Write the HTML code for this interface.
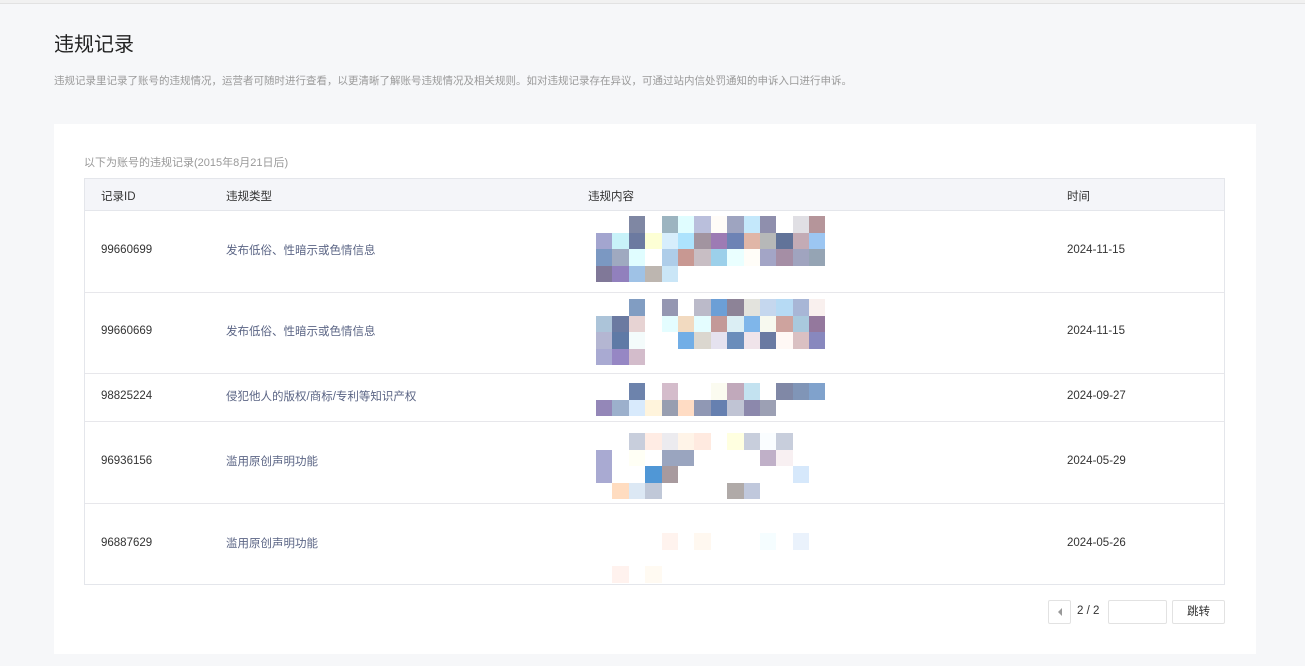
<!DOCTYPE html>
<html><head><meta charset="utf-8">
<style>
*{margin:0;padding:0;box-sizing:border-box}
body{width:1305px;height:666px;background:#f6f7f9;font-family:"Liberation Sans","Noto Sans CJK SC",sans-serif;position:relative;overflow:hidden}
.top{position:absolute;left:0;top:0;width:1305px;height:4px;background:#f1f1f1;border-bottom:1px solid #e2e2e2}
h1{position:absolute;left:54px;top:28px;font-size:20px;font-weight:normal;color:#222}
.desc{position:absolute;left:54px;top:73px;font-size:10.5px;color:#9a9a9a;white-space:nowrap}
.card{position:absolute;left:54px;top:124px;width:1202px;height:530px;background:#fff}
.cap{position:absolute;left:84px;top:154px;font-size:11px;color:#999}
.tbl{position:absolute;left:84px;top:178px;width:1141px;height:407px;border:1px solid #e4e6eb}
.hd{position:absolute;left:0;top:0;width:100%;height:32px;background:#f4f5f9;border-bottom:1px solid #e4e6eb}
.t{position:absolute;font-size:11.5px;color:#333;white-space:nowrap}
.ty{color:#5b6585;margin-top:-2px}
.line{position:absolute;left:0;width:100%;height:1px;background:#e7e7eb}
.m{position:absolute;display:grid;grid-template-columns:repeat(14,16.4px);grid-auto-rows:16.5px;left:596px}
.pg{position:absolute;top:600px;height:24px;border:1px solid #e2e2e2;background:#fff;border-radius:2px;font-size:11.5px;color:#333;text-align:center;line-height:22px}
</style></head><body>
<div class="top"></div>
<h1>违规记录</h1>
<div class="desc">违规记录里记录了账号的违规情况，运营者可随时进行查看，以更清晰了解账号违规情况及相关规则。如对违规记录存在异议，可通过站内信处罚通知的申诉入口进行申诉。</div>
<div class="card"></div>
<div class="cap">以下为账号的违规记录(2015年8月21日后)</div>
<div class="tbl">
<div class="hd"></div>
<div class="t" style="left:16px;top:9px">记录ID</div>
<div class="t" style="left:141px;top:9px">违规类型</div>
<div class="t" style="left:503px;top:9px">违规内容</div>
<div class="t" style="left:982px;top:9px">时间</div>
<div class="line" style="top:113px"></div>
<div class="line" style="top:194px"></div>
<div class="line" style="top:242px"></div>
<div class="line" style="top:324px"></div>
<div class="t" style="left:16px;top:65px">99660699</div><div class="t ty" style="left:141px;top:65px">发布低俗、性暗示或色情信息</div><div class="t" style="left:982px;top:65px">2024-11-15</div>
<div class="t" style="left:16px;top:146px">99660669</div><div class="t ty" style="left:141px;top:146px">发布低俗、性暗示或色情信息</div><div class="t" style="left:982px;top:146px">2024-11-15</div>
<div class="t" style="left:16px;top:211px">98825224</div><div class="t ty" style="left:141px;top:211px">侵犯他人的版权/商标/专利等知识产权</div><div class="t" style="left:982px;top:211px">2024-09-27</div>
<div class="t" style="left:16px;top:276px">96936156</div><div class="t ty" style="left:141px;top:276px">滥用原创声明功能</div><div class="t" style="left:982px;top:276px">2024-05-29</div>
<div class="t" style="left:16px;top:358px">96887629</div><div class="t ty" style="left:141px;top:358px">滥用原创声明功能</div><div class="t" style="left:982px;top:358px">2024-05-26</div>
</div>

<div class="m" style="top:216px">
<i></i><i></i><i style="background:#7f87a3"></i><i></i><i style="background:#9cb4c0"></i><i style="background:#e0fdff"></i><i style="background:#babfdc"></i><i style="background:#fffcf8"></i><i style="background:#9ea4c0"></i><i style="background:#c4e8fb"></i><i style="background:#8f8fad"></i><i></i><i style="background:#e0dfe4"></i><i style="background:#b5959a"></i>
<i style="background:#a3a5cf"></i><i style="background:#c8f2f9"></i><i style="background:#6c7aa0"></i><i style="background:#fdffd5"></i><i style="background:#d7eefc"></i><i style="background:#ade3fd"></i><i style="background:#a294a0"></i><i style="background:#9d7bb4"></i><i style="background:#6d83b5"></i><i style="background:#e0b6a7"></i><i style="background:#b6b8b8"></i><i style="background:#617399"></i><i style="background:#c3abb5"></i><i style="background:#9cc6f2"></i>
<i style="background:#7b98c2"></i><i style="background:#9fa9c0"></i><i style="background:#e0fdff"></i><i></i><i style="background:#aecde9"></i><i style="background:#c89892"></i><i style="background:#c8bec4"></i><i style="background:#9cd0ea"></i><i style="background:#eaffff"></i><i style="background:#fffdf8"></i><i style="background:#a3a5c6"></i><i style="background:#a58ea5"></i><i style="background:#a0a4bf"></i><i style="background:#95a4b4"></i>
<i style="background:#807898"></i><i style="background:#9180bd"></i><i style="background:#9fc2e6"></i><i style="background:#bdb6b0"></i><i style="background:#cae6f7"></i>
</div>
<div class="m" style="top:299px">
<i></i><i></i><i style="background:#819dc2"></i><i></i><i style="background:#9597b2"></i><i></i><i style="background:#bbbac9"></i><i style="background:#6c9fd6"></i><i style="background:#8d8397"></i><i style="background:#e3e3dd"></i><i style="background:#c5d7ee"></i><i style="background:#b6daf4"></i><i style="background:#a8b6d6"></i><i style="background:#f9f0ee"></i>
<i style="background:#acc4d9"></i><i style="background:#6b7aa1"></i><i style="background:#e7d3d3"></i><i></i><i style="background:#e4fdff"></i><i style="background:#f2dac0"></i><i style="background:#e4fdff"></i><i style="background:#c39998"></i><i style="background:#dbeef4"></i><i style="background:#7fb6ea"></i><i style="background:#f7f9ef"></i><i style="background:#cea39e"></i><i style="background:#a9c9dd"></i><i style="background:#94789d"></i>
<i style="background:#b4b6d2"></i><i style="background:#5f7aa6"></i><i style="background:#f4fbfb"></i><i></i><i></i><i style="background:#72aee6"></i><i style="background:#dbd7cf"></i><i style="background:#e5e2ef"></i><i style="background:#6a8dbb"></i><i style="background:#f0e4ea"></i><i style="background:#6a7aa2"></i><i style="background:#fff8f5"></i><i style="background:#dac0c2"></i><i style="background:#8888be"></i>
<i style="background:#a9aad2"></i><i style="background:#9687c4"></i><i style="background:#d3bccb"></i>
</div>
<div class="m" style="top:383px">
<i></i><i></i><i style="background:#6d83ac"></i><i></i><i style="background:#d4bccb"></i><i></i><i></i><i style="background:#fbfbf0"></i><i style="background:#c1a9bb"></i><i style="background:#c3e2f0"></i><i></i><i style="background:#8088a6"></i><i style="background:#8095b7"></i><i style="background:#80a2cc"></i>
<i style="background:#9487b8"></i><i style="background:#9cb0cc"></i><i style="background:#d8eafc"></i><i style="background:#fff4dc"></i><i style="background:#989eb0"></i><i style="background:#ffdcc4"></i><i style="background:#9098b4"></i><i style="background:#6680b0"></i><i style="background:#c0c4d4"></i><i style="background:#8c88ac"></i><i style="background:#9ca0b4"></i>
</div>
<div class="m" style="top:433px">
<i></i><i></i><i style="background:#c8cedc"></i><i style="background:#ffece4"></i><i style="background:#ecebef"></i><i style="background:#fff4e8"></i><i style="background:#ffeae0"></i><i></i><i style="background:#ffffe0"></i><i style="background:#c8cedc"></i><i style="background:#fafdff"></i><i style="background:#c8cedc"></i><i></i><i></i>
<i style="background:#a9aad2"></i><i></i><i style="background:#fffff5"></i><i></i><i style="background:#9aa5bf"></i><i style="background:#9aa5bf"></i><i></i><i></i><i></i><i></i><i style="background:#c0b0c8"></i><i style="background:#f8f0f2"></i><i></i><i></i>
<i style="background:#a9aad2"></i><i></i><i></i><i style="background:#5097d6"></i><i style="background:#a89a9e"></i><i></i><i></i><i></i><i></i><i></i><i></i><i></i><i style="background:#d6e8fb"></i><i></i>
<i></i><i style="background:#ffdcc0"></i><i style="background:#dce8f4"></i><i style="background:#c0c8d8"></i><i></i><i></i><i></i><i></i><i style="background:#b0aaa8"></i><i style="background:#c0c8dc"></i>
</div>
<div class="m" style="top:533px">
<i></i><i></i><i></i><i></i><i style="background:#fff3ee"></i><i></i><i style="background:#fff8f0"></i><i></i><i></i><i></i><i style="background:#f5fdff"></i><i></i><i style="background:#eaf2fc"></i><i></i>
<i></i><i></i><i></i><i></i><i></i><i></i><i></i><i></i><i></i><i></i><i></i><i></i><i></i><i></i>
<i></i><i style="background:#fff2ee"></i><i></i><i style="background:#fffaf2"></i>
</div>

<div class="pg" style="left:1048px;width:23px"><svg width="8" height="8" viewBox="0 0 8 8" style="margin-top:7px"><path d="M6 0L2 4L6 8Z" fill="#999"/></svg></div>
<div class="t" style="left:1077px;top:605px">2 / 2</div>
<div class="pg" style="left:1108px;width:59px"></div>
<div class="pg" style="left:1172px;width:53px">跳转</div>
</body></html>
